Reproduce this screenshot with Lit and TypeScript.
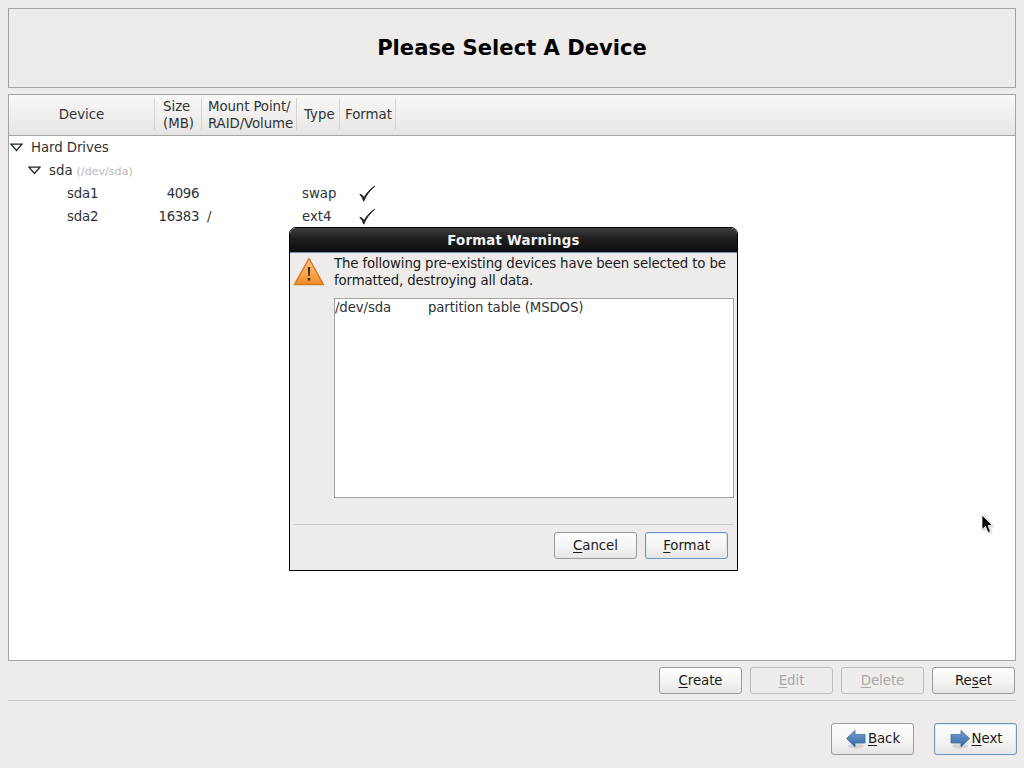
import { LitElement, html, css, svg } from "lit";
import { customElement } from "lit/decorators.js";

const arrow = (dir: "l" | "r") => html`<svg class="nav-ico" width="22" height="22" viewBox="0 0 22 22">
  <defs><linearGradient id="ng${dir}" x1="0" y1="0" x2="0" y2="1"><stop offset="0" stop-color="#7ba3cf"/><stop offset="1" stop-color="#2f64a0"/></linearGradient></defs>
  <ellipse cx="11" cy="18" rx="8" ry="2.5" fill="#000" opacity=".1"/>
  ${dir === "l"
    ? svg`<path d="M1.5 10.5 10 2.5V6.5H20V15H10V19Z" fill="url(#ngl)" stroke="#3a6ea5" stroke-width=".8"/>`
    : svg`<path d="M20.5 10.5 12 2.5V6.5H2V15H12V19Z" fill="url(#ngr)" stroke="#3a6ea5" stroke-width=".8"/>`}
</svg>`;

const check = html`<svg class="check" width="20" height="20" viewBox="0 0 18 18"><path d="M2.500 9.500C4 10.500 5 12 6 15.500 8 10.500 11.500 5.500 16 2 11.500 5 8.500 8.500 6.300 12.300 5.500 10.800 4.500 9.700 2.500 9.500Z" fill="#1a1e26" stroke="#1a1e26" stroke-width=".9"/></svg>`;

const tri = html`<svg class="tri" width="13" height="9" viewBox="0 0 13 9"><path d="M1 1.200H12L6.500 7.500Z" fill="#fff" stroke="#1f2325" stroke-width="1.200"/></svg>`;

@customElement("app-root")
export class AppRoot extends LitElement {
  static styles = css`
    :host {
      display: block; position: relative; width: 1024px; height: 768px; overflow: hidden;
      background: #edeceb; color: #1a1a1a;
      font-family: "DejaVu Sans", sans-serif; font-size: 13.33px; line-height: 17px;
    }
    .page { display: flex; flex-direction: column; height: 768px; box-sizing: border-box; padding: 8px 8px 0 8px; }
    .title {
      height: 80px; box-sizing: border-box; border: 1px solid #a3a3a0; flex: none;
      display: flex; align-items: center; justify-content: center;
      font-size: 21.1px; font-weight: 700; color: #000; padding-bottom: 2px;
    }
    .table { margin-top: 6px; height: 567px; flex: none; box-sizing: border-box; border: 1px solid #a3a3a0; background: #fff; display: flex; flex-direction: column; }
    .thead { display: flex; height: 41px; flex: none; box-sizing: border-box; border-bottom: 1px solid #a6a6a3; background: linear-gradient(#f8f8f7 0%, #f1f0ef 45%, #e6e5e3 100%); padding: 3px 0 5px; color: #2e3436; }
    .th { box-sizing: border-box; border-right: 1px solid #d3d2cf; display: flex; align-items: center; padding-left: 6px; line-height: 17px; }
    .th span { padding-top: 2px; }
    .c1 { width: 146px; justify-content: center; padding: 0; }
    .c2 { width: 47px; justify-content: center; padding-left: 1px; letter-spacing: -.05px; }
    .c3 { width: 95px; letter-spacing: -.1px; }
    .c4 { width: 43px; padding-left: 7px; }
    .c5 { width: 56px; padding-left: 5px; }
    .rows { flex: 1; color: #2e3436; }
    .row { height: 23px; display: flex; align-items: center; }
    .tri { flex: none; }
    .r0 { padding-left: 1px; gap: 8px; letter-spacing: -.08px; }
    .r1 { padding-left: 19px; gap: 8px; }
    .dim { color: #b8b8b8; font-size: 11.100px; margin-left: 4px; }
    .name { width: 145px; padding-left: 58px; box-sizing: border-box; flex: none; letter-spacing: -.15px; }
    .size { width: 46px; text-align: right; flex: none; box-sizing: border-box; padding-right: 1px; letter-spacing: -.4px; }
    .mount { width: 102px; padding-left: 7px; box-sizing: border-box; flex: none; }
    .ty { width: 55px; box-sizing: border-box; flex: none; }
    .check { flex: none; }
    .actions { display: flex; justify-content: flex-end; gap: 8px; margin-top: 6px; padding-right: 1px; flex: none; }
    .btn {
      box-sizing: border-box; width: 83px; height: 27px; border: 1px solid #9a9a97; border-radius: 3px;
      background: linear-gradient(#fdfdfd 0%, #f5f5f4 50%, #e6e5e3 100%);
      display: flex; align-items: center; justify-content: center; color: #1a1a1a;
      padding: 0; letter-spacing: -.05px;
    }
    .btn.dis { color: #a9a9a7; background: #eeedec; border-color: #bdbdba; }
    .btn u { text-underline-offset: 2px; }
    .sep { height: 1px; flex: none; background: #c9c8c5; margin-top: 6px; }
    .nav { display: flex; justify-content: flex-end; gap: 20px; margin-top: 22px; margin-right: -1px; flex: none; }
    .nav .btn { height: 32px; gap: 1px; }
    .nav .btn span { padding-bottom: 2px; }
    .focus { border-color: #6f94bd; box-shadow: inset 0 0 0 1px #dfe9f3; }
    .dialog {
      position: absolute; left: 289px; top: 227px; width: 449px; height: 344px; box-sizing: border-box;
      border: 1px solid #000; border-radius: 7px 7px 0 0; background: #edeceb; display: flex; flex-direction: column; overflow: hidden;
    }
    .dtitle {
      height: 25px; flex: none; box-sizing: border-box; background: linear-gradient(#3c3c3c 0%, #1d1d1d 50%, #0d0d0d 100%);
      color: #f2f2f2; font-weight: 700; display: flex; align-items: center; justify-content: center; padding-top: 1px; letter-spacing: .24px;
      border-bottom: 1px solid #6d8fb5;
    }
    .dbody { flex: 1; display: flex; flex-direction: column; padding: 1px 3px 0 3px; min-height: 0; }
    .msgrow { display: flex; flex: none; gap: 9px; }
    .warn { flex: none; margin-top: 2px; }
    .msg { padding-top: 1px; color: #1a1a1a; width: 400px; letter-spacing: -.15px; }
    .list {
      margin-left: 41px; margin-top: 9px; height: 200px; flex: none; box-sizing: border-box;
      background: #fff; border: 1px solid #a3a3a0; color: #2e3436; display: flex; padding-top: 1px; line-height: 16px; letter-spacing: -.13px;
    }
    .list span:first-child { width: 93px; flex: none; }
    .dsep { height: 1px; background: #cfcecb; margin-top: 26px; flex: none; }
    .dact { display: flex; justify-content: flex-end; gap: 8px; padding: 7px 6px 0 0; }
    .cursor { position: absolute; left: 981px; top: 514px; filter: drop-shadow(1px 1px 1px rgba(0,0,0,.25)); }
  `;

  render() {
    return html`
      <div class="page">
        <div class="title">Please Select A Device</div>
        <div class="table">
          <div class="thead">
            <div class="th c1">Device</div>
            <div class="th c2"><span>Size<br />(MB)</span></div>
            <div class="th c3"><span>Mount Point/<br />RAID/Volume</span></div>
            <div class="th c4">Type</div>
            <div class="th c5">Format</div>
          </div>
          <div class="rows">
            <div class="row r0">${tri}<span>Hard Drives</span></div>
            <div class="row r1">${tri}<span>sda<span class="dim">(/dev/sda)</span></span></div>
            <div class="row"><span class="name">sda1</span><span class="size">4096</span><span class="mount"></span><span class="ty">swap</span>${check}</div>
            <div class="row"><span class="name">sda2</span><span class="size">16383</span><span class="mount">/</span><span class="ty">ext4</span>${check}</div>
          </div>
        </div>
        <div class="actions">
          <div class="btn"><span><u>C</u>reate</span></div>
          <div class="btn dis"><span><u>E</u>dit</span></div>
          <div class="btn dis"><span><u>D</u>elete</span></div>
          <div class="btn"><span>Re<u>s</u>et</span></div>
        </div>
        <div class="sep"></div>
        <div class="nav">
          <div class="btn">${arrow("l")}<span><u>B</u>ack</span></div>
          <div class="btn focus">${arrow("r")}<span><u>N</u>ext</span></div>
        </div>
      </div>
      <div class="dialog">
        <div class="dtitle">Format Warnings</div>
        <div class="dbody">
          <div class="msgrow">
            <svg class="warn" width="32" height="32" viewBox="0 0 32 32">
              <defs><linearGradient id="wg" x1="0" y1="0" x2="0" y2="1"><stop offset="0" stop-color="#fbc58a"/><stop offset=".55" stop-color="#f8a850"/><stop offset="1" stop-color="#ee8c2a"/></linearGradient></defs>
              <path d="M16 2.500 30.500 28.500H1.500Z" fill="url(#wg)" stroke="#d9781f" stroke-width="1.500" stroke-linejoin="round"/>
              <path d="M14.800 11h2.400l-.5 9h-1.400ZM14.800 22h2.400v2.400h-2.400Z" fill="#3a2a1a"/>
            </svg>
            <div class="msg">The following pre-existing devices have been selected to be formatted, destroying all data.</div>
          </div>
          <div class="list"><span>/dev/sda</span><span>partition table (MSDOS)</span></div>
          <div class="dsep"></div>
          <div class="dact">
            <div class="btn"><span><u>C</u>ancel</span></div>
            <div class="btn focus"><span><u>F</u>ormat</span></div>
          </div>
        </div>
      </div>
      <svg class="cursor" width="14" height="20" viewBox="0 0 14 20"><path d="M1 1V15.500L4.500 12.500 7 18.500 9.500 17.500 7 11.500H11.500Z" fill="#000" stroke="#fff" stroke-width=".8"/></svg>
    `;
  }
}
